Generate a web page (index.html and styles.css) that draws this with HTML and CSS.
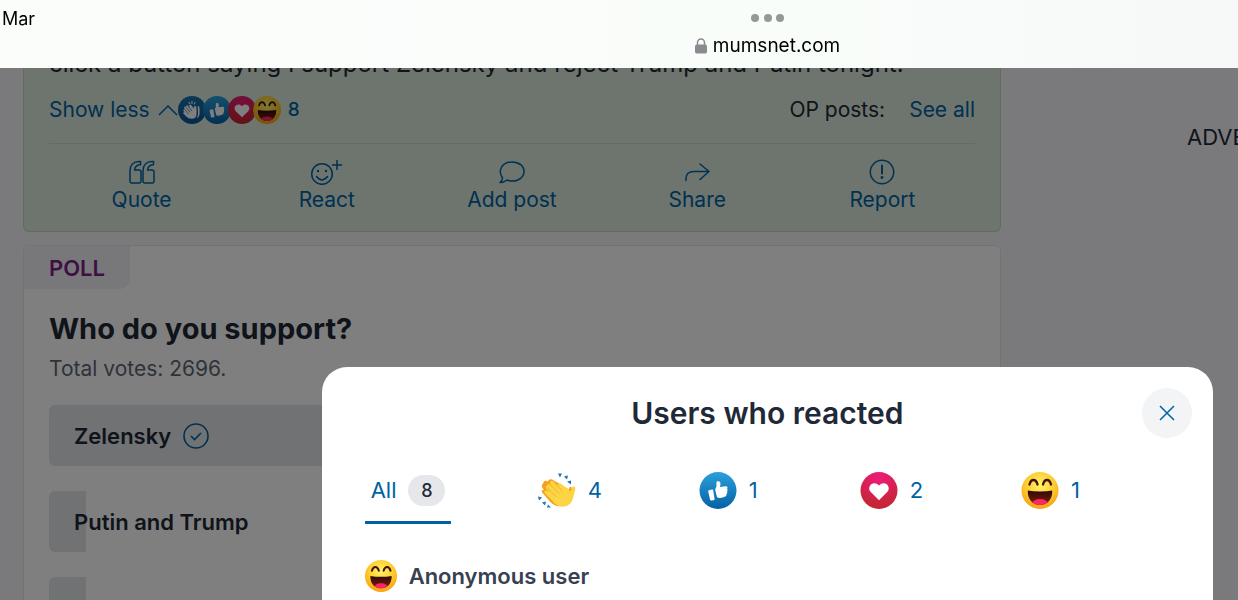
FILE: index.html
```
<!DOCTYPE html>
<html lang="en">
<head>
<meta charset="utf-8">
<title>mumsnet.com</title>
<link rel="stylesheet" href="styles.css">
</head>
<body>
<svg class="defs" aria-hidden="true">
  <defs>
    <linearGradient id="g-blue" x1="0" y1="0" x2="0" y2="1"><stop offset="0" stop-color="#2ba0dc"/><stop offset="1" stop-color="#0561a3"/></linearGradient>
    <linearGradient id="g-navy" x1="0" y1="0" x2="0" y2="1"><stop offset="0" stop-color="#1672ad"/><stop offset="1" stop-color="#095590"/></linearGradient>
    <radialGradient id="g-red" cx=".5" cy=".15" r=".85"><stop offset="0" stop-color="#ee1b7c"/><stop offset="1" stop-color="#c1272d"/></radialGradient>
    <radialGradient id="g-face" cx=".5" cy=".35" r=".65"><stop offset="0" stop-color="#fff46a"/><stop offset=".6" stop-color="#fccb2e"/><stop offset="1" stop-color="#f9a10b"/></radialGradient>
    <linearGradient id="g-mouth" x1="0" y1="0" x2="0" y2="1"><stop offset="0" stop-color="#2c0503"/><stop offset="1" stop-color="#7d2410"/></linearGradient>
    <clipPath id="mouth"><path d="M6 18.500Q18.500 20.500 31 18.500C31 27 26 33 18.500 33S6 27 6 18.500z"/></clipPath>
    <symbol id="thumb" viewBox="0 0 37 37">
      <circle cx="18.500" cy="18.500" r="18.500" fill="url(#g-blue)"/>
      <path fill="#fff" d="M9.500 18.200l3-.6q1-.1 1.200.8l1.400 8.600q.1 1-.9 1.200l-2.400.3q-1 .1-1.200-.8L8.700 19.400q-.1-1 .8-1.200zM15.600 17.200c2-1.800 1.300-4.500 1.300-6.600 0-2.100 3.700-1.900 4 .4.200 1.600-.3 2.900-.5 4l5.600-.7c2.200-.1 2.500 2 1.500 2.700 1 .8.800 2.100-.1 2.600.8.900.4 2.100-.5 2.500.5 1.100-.1 2.200-1.300 2.500-2.300 1.200-5.500 2-8.100.7z"/>
    </symbol>
    <symbol id="heart" viewBox="0 0 37 37">
      <circle cx="18.500" cy="18.500" r="18.500" fill="url(#g-red)"/>
      <path fill="#fff" d="M18.500 28.200L10.300 20.100C5.500 14.800 12.800 7.400 18.500 13.400 24.200 7.400 31.500 14.800 26.700 20.100z"/>
    </symbol>
    <symbol id="laugh" viewBox="0 0 37 37">
      <circle cx="18.500" cy="18.500" r="18.500" fill="url(#g-face)"/>
      <path d="M8 12.500C9.500 6.500 14.500 6.500 16 12.500M21.500 12.500C23 6.500 28 6.500 29.500 12.500" fill="none" stroke="#421408" stroke-width="2.300" stroke-linecap="round"/>
      <g clip-path="url(#mouth)"><path fill="url(#g-mouth)" d="M5 17h28v17H5z"/><ellipse cx="18.500" cy="32" rx="8" ry="5" fill="#ff2565"/></g>
    </symbol>
    <symbol id="clap-badge" viewBox="0 0 37 37">
      <circle cx="18.500" cy="18.500" r="18.500" fill="url(#g-navy)"/>
      <path fill="#fff" d="M8 15Q9 13 11 15L12 16 10.500 13.500Q12 11.500 13.500 13L16 15.500 14.500 12.500Q16 10.500 18 12.500L21 17Q20.500 13 22.500 13Q24.500 13.500 24.500 17V24Q24 30 18 30Q13.500 30 11 27L7 23Q6.500 21 8.500 21.500L7 19Q7 17 9 18.500z"/>
      <path fill="#fff" d="M26 13Q28.500 13 28.500 16.500V24Q28 28 24.500 29.500Q26.500 27 26.500 23zM27 16z"/>
      <path fill="none" stroke="#12609a" stroke-width=".9" d="M11 15.500l5 6M13.500 13.500l5 6.500M9 18.500l5 5"/>
      <path fill="none" stroke="#fff" stroke-width="1.400" stroke-linecap="round" d="M14.500 8.500l1.200 1.800M18.500 7v3M22.500 8.500l-1 2"/>
    </symbol>
    <symbol id="clap" viewBox="0 0 38 34">
      <path fill="#f5a11d" d="M5 10Q6 6 10 8Q11 4 16 7L31 16Q31 11 35 15L30 29Q20 37 12 28L5 20Q2 17 6 16Q2 13 5 10z"/>
      <path fill="#fdd443" d="M9 12Q10 9 13 12L16 15 12 10Q12 6 16 8L20 12Q20 8 24 11L33 18Q33 13 36 13Q38 13 37 17L35 25Q33 32 26 33 19 34 15 28L7 20Q5 17 9 17L12 19 8 15Q7 13 9 12z"/>
      <path d="M12 11l9 9M9 14l9 9M16 9l8 8" fill="none" stroke="#f4b62b"/>
      <path fill="#1b75b7" d="M20 0h4l-2 4zM26 3l4-1-1 4zM29 8l4-1v4zM0 23l4 1-3 3zM4 29l4-1-1 4zM10 31l3 3h-4z"/>
    </symbol>
  </defs>
</svg>

<header class="browser-bar">
  <span class="date">Mar</span>
  <div class="address">
    <svg class="dots" viewBox="0 0 34 8" aria-hidden="true"><circle cx="4" cy="4" r="4"/><circle cx="17" cy="4" r="4"/><circle cx="29" cy="4" r="4"/></svg>
    <div class="url">
      <svg class="lock" viewBox="0 0 12 16" aria-hidden="true"><rect y="6.500" width="12" height="9" rx="1.800"/><path d="M2.500 8V4.500a3.500 3.500 0 0 1 7 0V8"/></svg>
      <span>mumsnet.com</span>
    </div>
  </div>
</header>

<div class="page">
  <main class="thread">
    <article class="post">
      <p class="post-text">click a button saying I support Zelensky and reject Trump and Putin tonight.</p>
      <div class="meta">
        <button class="link show-less">Show less
          <svg class="chevron" viewBox="0 0 20 12" aria-hidden="true"><path d="M1 11l9-9 9 9"/></svg>
        </button>
        <button class="link reactions" aria-label="8 reactions">
          <svg><use href="#clap-badge"/></svg><svg><use href="#thumb"/></svg><svg><use href="#heart"/></svg><svg><use href="#laugh"/></svg>
          <span>8</span>
        </button>
        <span class="op">OP posts:</span>
        <a class="link" href="#all">See all</a>
      </div>
      <div class="actions">
        <button class="action"><svg viewBox="0 0 26 26"><path d="M11.500 2.500v3.200C8 5.700 6 7.500 5.500 11H10q2 0 2 2v9q0 2-2 2H3q-2 0-2-2V12C1 6 4.500 2.500 10 2.500zM24.500 2.500v3.200c-3.500 0-5.500 1.800-6 5.300H23q2 0 2 2v9q0 2-2 2h-7q-2 0-2-2V12c0-6 3.500-9.500 9-9.500z"/></svg>Quote</button>
        <button class="action"><svg class="wide" viewBox="0 0 34 26"><circle cx="12" cy="15" r="10.300"/><path d="M6.500 17.500q5.500 7 11 0M27 1.500v9M22.500 6h9"/><circle class="dot" cx="8" cy="12" r="1.200"/><circle class="dot" cx="16" cy="12" r="1.200"/></svg>React</button>
        <button class="action"><svg viewBox="0 0 26 26"><path d="M3.500 18.800C-1.800 11.500 3.300 3 13 3c7 0 12 4 12 9.500S20 22 13 22q-3 0-5-1-3 2.500-7 2.500 2.500-2 2.500-4.700z"/></svg>Add post</button>
        <button class="action"><svg viewBox="0 0 26 26"><path d="M2 21.500v-2q0-7 8-7h15M16 5l9 7.500L16 20.500"/></svg>Share</button>
        <button class="action"><svg viewBox="0 0 26 26"><circle cx="13" cy="13" r="11.700"/><path stroke-width="2" d="M13 6.500v8"/><circle class="dot" cx="13" cy="18.500" r="1.400"/></svg>Report</button>
      </div>
    </article>

    <section class="poll">
      <span class="tag">POLL</span>
      <div class="poll-body">
        <h2>Who do you support?</h2>
        <p class="votes">Total votes: 2696.</p>
        <ul class="options">
          <li><span class="fill" style="width:96%"></span><span class="name">Zelensky</span><svg class="tick" viewBox="0 0 26 26" aria-hidden="true"><circle cx="13" cy="13" r="12"/><path d="M8 13l3.500 3.500 6.500-6.500"/></svg></li>
          <li><span class="fill" style="width:4%"></span><span class="name">Putin and Trump</span></li>
          <li><span class="fill" style="width:4%"></span></li>
        </ul>
      </div>
    </section>
  </main>
  <aside class="ad">ADVERTISEMENT</aside>
</div>

<div class="backdrop"></div>
<section class="dialog" role="dialog" aria-labelledby="dialog-title">
  <h2 id="dialog-title">Users who reacted</h2>
  <button class="close" aria-label="Close"><svg viewBox="0 0 16 16"><path d="M1 1l14 14M15 1L1 15"/></svg></button>
  <div class="tabs" role="tablist">
    <button class="tab all" role="tab" aria-selected="true">All <span class="count">8</span></button>
    <button class="tab" role="tab"><svg><use href="#clap"/></svg>4</button>
    <button class="tab" role="tab"><svg><use href="#thumb"/></svg>1</button>
    <button class="tab" role="tab"><svg><use href="#heart"/></svg>2</button>
    <button class="tab" role="tab"><svg><use href="#laugh"/></svg>1</button>
  </div>
  <div class="user"><svg><use href="#laugh"/></svg>Anonymous user</div>
</section>
</body>
</html>
```
FILE: styles.css
```
* { box-sizing: border-box; }

body {
  margin: 0;
  height: 100vh;
  overflow: hidden;
  background: #f4f4f8;
  color: #1f2937;
  font: 21px/32px Inter, "Liberation Sans", sans-serif;
}

h2, p, ul { margin: 0; padding: 0; }
button { padding: 0; border: 0; background: none; font: inherit; color: inherit; }
svg { flex: none; }
.defs { position: absolute; width: 0; height: 0; }

.browser-bar {
  position: fixed;
  inset: 0 0 auto;
  z-index: 3;
  padding: 14px 0 9px;
  background: linear-gradient(90deg, #fbfdfb, #f9fdfa 65%, #f7f8f8);
  color: #000;
}
.date { position: absolute; left: 2px; top: 8px; font-size: 18px; line-height: 22px; }
.address { display: flex; flex-direction: column; align-items: center; gap: 11px; padding-left: 24%; }
.dots { width: 34px; height: 8px; fill: #949896; }
.url { display: flex; align-items: center; gap: 6px; font-size: 19px; line-height: 26px; }
.lock { width: 12px; height: 16px; fill: #8a8a8f; }
.lock path { fill: none; stroke: #8a8a8f; stroke-width: 1.5; }

.page { display: grid; grid-template-columns: minmax(0, 1fr) 237px; height: 100%; padding: 40px 0 0 23px; overflow: hidden; }
.thread { display: flex; flex-direction: column; gap: 13px; }

.post {
  padding: 8px 25px 16px;
  border: 1px solid #c0d8c3;
  border-top: 0;
  border-radius: 0 0 6px 6px;
  background: #dbebdd;
}
.post-text { font-size: 24px; white-space: nowrap; }
.meta { display: flex; align-items: center; height: 64px; border-bottom: 1px solid #c9dacb; padding-bottom: 4px; }
.link { color: #0062a3; text-decoration: none; }
.show-less, .reactions { display: flex; align-items: center; }
.show-less { gap: 8px; }
.chevron { width: 20px; height: 12px; fill: none; stroke: currentColor; stroke-width: 1.5; }
.reactions svg { width: 28px; height: 28px; margin-right: -3px; }
.reactions span { margin-left: 10px; font-size: 19px; font-weight: 500; }
.op { margin: 0 24px 0 auto; }

.actions { display: grid; grid-template-columns: repeat(5, 1fr); padding-top: 15px; color: #0062a3; }
.action { display: flex; flex-direction: column; align-items: center; line-height: 30px; }
.action svg { width: 26px; height: 26px; fill: none; stroke: currentColor; stroke-width: 1.5; stroke-linecap: round; stroke-linejoin: round; }
.action .wide { width: 34px; }
.action .dot { fill: currentColor; stroke: none; }

.poll { border: 1px solid #e5e7eb; border-radius: 6px; background: #fff; }
.tag {
  display: inline-block;
  padding: 6px 25px 5px;
  border-radius: 0 0 10px;
  background: #f0f0f5;
  color: #7d1f86;
  font-size: 22px;
  font-weight: 600;
}
.poll-body { padding: 20px 25px; }
.poll h2 { font-size: 29px; line-height: 40px; font-weight: 700; }
.votes { color: #5d6673; margin-top: 4px; }
.options { display: grid; gap: 25px; margin-top: 20px; list-style: none; }
.options li { position: relative; display: flex; align-items: center; gap: 12px; height: 61px; padding-left: 25px; font-size: 22px; font-weight: 600; border-radius: 6px; overflow: hidden; }
.fill { position: absolute; inset: 0 auto 0 0; background: #e1e4e8; }
.name, .tick { position: relative; }
.tick { width: 26px; height: 26px; fill: none; stroke: #0062a3; stroke-width: 1.6; }

.ad { padding: 81px 0 0 186px; overflow: hidden; font-size: 22px; white-space: nowrap; }

.backdrop { position: fixed; inset: 0; z-index: 1; background: rgba(0, 0, 0, .5); }

.dialog {
  position: fixed;
  z-index: 2;
  top: 367px;
  right: 25px;
  bottom: 0;
  width: 72%;
  padding: 26px 43px 0;
  border-radius: 25px 25px 0 0;
  background: #fff;
  font-size: 22px;
}
.dialog h2 { font-size: 30px; line-height: 40px; font-weight: 600; text-align: center; }
.close { position: absolute; top: 21px; right: 21px; display: grid; place-items: center; width: 50px; height: 50px; border-radius: 50%; background: #f3f4f6; color: #0062a3; }
.close svg { width: 16px; height: 16px; fill: none; stroke: currentColor; stroke-width: 1.5; }
.tabs { display: grid; grid-template-columns: repeat(5, 1fr); margin-top: 24px; }
.tab { display: flex; align-items: center; justify-self: start; gap: 12px; height: 67px; padding: 2px 12px 0; border-bottom: 3px solid transparent; color: #0062a3; }
.tab svg { width: 38px; height: 37px; }
.tab.all { padding: 2px 6px 0; border-color: #0062a3; }
.count { width: 37px; border-radius: 16px; background: #e5e7eb; color: #1f2937; font-size: 18px; font-weight: 500; line-height: 31px; }
.user { display: flex; align-items: center; gap: 12px; margin-top: 36px; color: #374151; font-weight: 600; }
.user svg { width: 32px; height: 32px; }
```
